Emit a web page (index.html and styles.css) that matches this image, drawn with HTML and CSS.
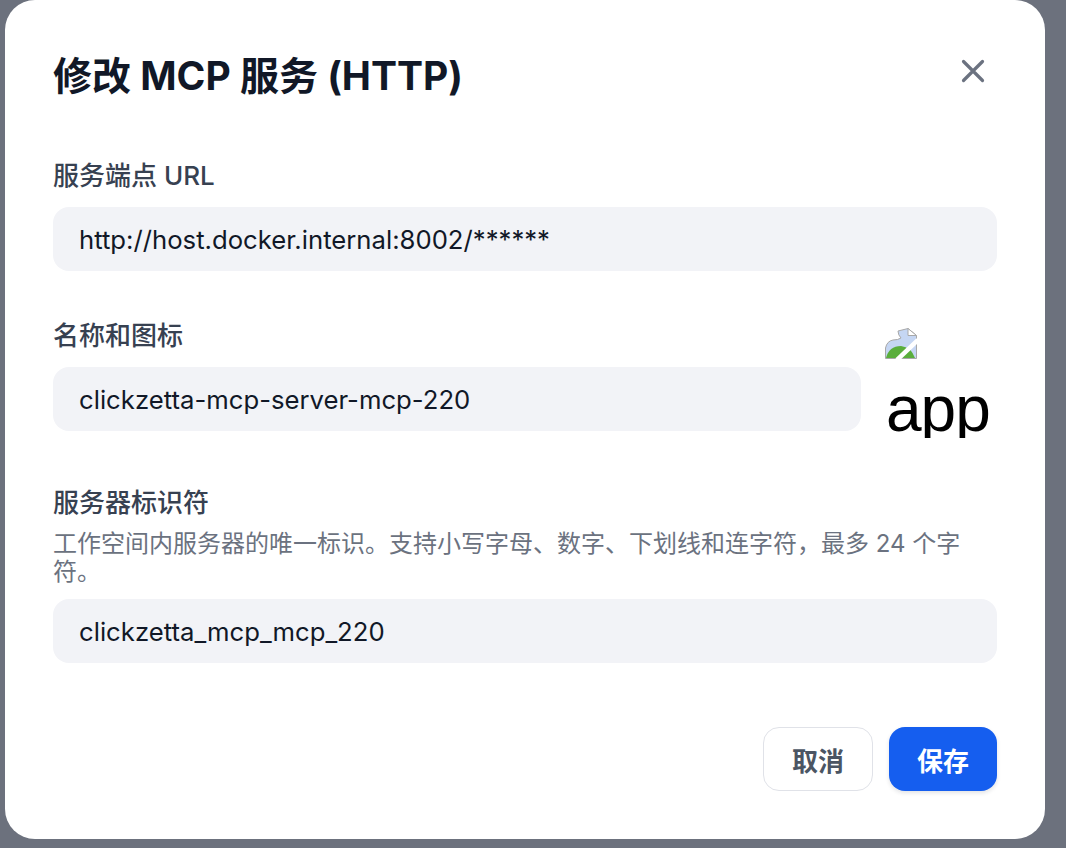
FILE: index.html
```html
<!DOCTYPE html>
<html lang="zh-CN">
<head>
<meta charset="utf-8">
<title>修改 MCP 服务 (HTTP)</title>
<link rel="stylesheet" href="styles.css">
</head>
<body>
<div class="modal">
  <header class="modal-head">
    <h1 class="modal-title">修改 MCP 服务 (HTTP)</h1>
    <button class="close" aria-label="关闭">
      <svg width="24" height="24" viewBox="0 0 24 24" fill="none" stroke="#6b7280" stroke-width="3.2" stroke-linecap="round"><path d="M2.5 2.5 21.5 21.5M21.5 2.5 2.5 21.5"/></svg>
    </button>
  </header>
  <div class="form">
    <section class="field">
      <div class="label">服务端点 URL</div>
      <div class="input">http://host.docker.internal:8002/******</div>
    </section>
    <section class="field">
      <div class="label">名称和图标</div>
      <div class="name-row">
        <div class="input grow">clickzetta-mcp-server-mcp-220</div>
        <div class="app-icon">
          <svg class="broken" width="32" height="31" viewBox="0 0 32 31">
            <path d="M.5 30.5V20Q2 13 8 12Q13 12 16 10Q13 7 13 3L23 .5 31.5 7.5V30.5Z" fill="#c5d6f3" stroke="#a8a8a8" stroke-width="1"/>
            <path d="M1 30Q4 18 16 18Q26 19 30 30Z" fill="#5aae3c"/>
            <path d="M23 .5V7.5H31.5Z" fill="#fff" stroke="#a8a8a8" stroke-width="1"/>
            <path d="M12 32 33 12" stroke="#fff" stroke-width="4.5"/>
          </svg>
          <span class="app-alt">app</span>
        </div>
      </div>
    </section>
    <section class="field">
      <div class="label">服务器标识符</div>
      <div class="hint">工作空间内服务器的唯一标识。支持小写字母、数字、下划线和连字符，最多 24 个字符。</div>
      <div class="input">clickzetta_mcp_mcp_220</div>
    </section>
  </div>
  <footer class="actions">
    <button class="btn btn-ghost">取消</button>
    <button class="btn btn-primary">保存</button>
  </footer>
</div>
</body>
</html>
```
FILE: styles.css
```css
* { box-sizing: border-box; }
html, body { margin: 0; height: 100%; }
body {
  background: #6c717d;
  font-family: Inter, "Noto Sans CJK SC", sans-serif;
  overflow: hidden;
}
.modal {
  margin-left: 5px;
  width: 1040px;
  height: 839px;
  background: #fff;
  border-radius: 30px;
  padding: 48px;
  display: flex;
  flex-direction: column;
}
.modal-head {
  display: flex;
  justify-content: space-between;
  align-items: flex-start;
  height: 52px;
}
.modal-title {
  margin: 2px 0 0;
  font-size: 39px;
  line-height: 52px;
  font-weight: 700;
  color: #111827;
}
.close {
  border: 0;
  background: none;
  padding: 0;
  margin: 11px 12px 0 0;
  width: 24px;
  height: 24px;
  display: block;
}
.close svg { display: block; }
.form {
  margin-top: 59px;
  display: flex;
  flex-direction: column;
  gap: 48px;
}
.field { display: flex; flex-direction: column; }
.label {
  font-size: 26px;
  line-height: 34px;
  font-weight: 500;
  color: #374151;
  margin-bottom: 14px;
}
.hint {
  font-size: 24px;
  line-height: 28px;
  color: #6b7280;
  margin: -4px 0 13px;
  width: 920px;
}
.input {
  height: 64px;
  border-radius: 16px;
  background: #f2f3f7;
  padding: 0 26px;
  font-size: 25.7px;
  line-height: 66px;
  color: #111827;
}
.name-row { display: flex; align-items: flex-start; gap: 24px; }
.grow { flex: 1; }
.app-icon {
  width: 112px;
  height: 110px;
  flex: none;
  margin-top: -39px;
  overflow: hidden;
}
.broken { display: block; }
.app-alt {
  display: block;
  font-family: "Liberation Sans", Arial, sans-serif;
  font-size: 64px;
  letter-spacing: -1px;
  line-height: 72px;
  color: #000;
  margin: 14px 0 0 1px;
}
.actions {
  margin-top: auto;
  display: flex;
  justify-content: flex-end;
  gap: 16px;
}
.btn {
  height: 64px;
  border-radius: 16px;
  font-family: inherit;
  font-size: 26px;
  font-weight: 600;
  padding: 0;
}
.btn-ghost {
  width: 110px;
  background: #fff;
  border: 1.5px solid #e0e2e8;
  color: #4b5563;
}
.btn-primary {
  width: 108px;
  background: #155eef;
  border: 0;
  color: #fff;
  box-shadow: 0 2px 4px rgba(16, 24, 40, 0.12);
}
```
